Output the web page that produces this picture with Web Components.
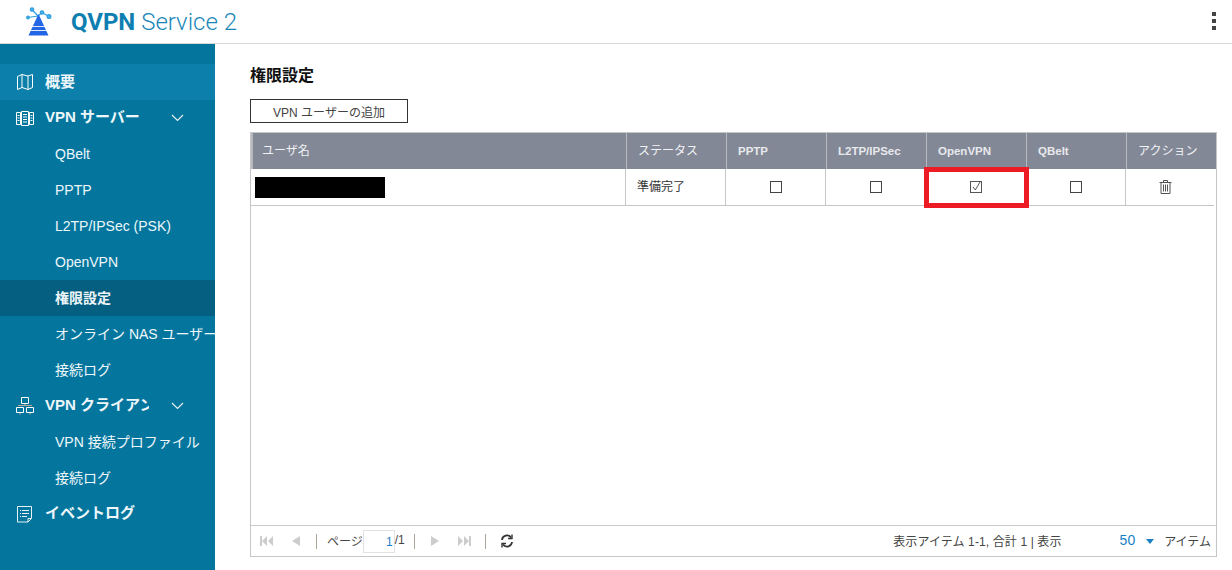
<!DOCTYPE html>
<html lang="ja"><head><meta charset="utf-8">
<style>
html,body{margin:0;padding:0;height:570px;width:1232px;overflow:hidden;background:#fff;font-family:"Liberation Sans","Noto Sans CJK JP",sans-serif}
qvpn-app{display:block}
</style></head><body>
<qvpn-app></qvpn-app>
<template id="t-header"><style>
:host{display:flex;align-items:center;height:43px;border-bottom:1px solid #d9d9d9;background:#fff;box-sizing:content-box}
svg.logo{margin-left:25px;width:28px;height:36px;flex:none}
.t{margin-left:18px;font:300 24px/30px Roboto,"Liberation Sans",sans-serif;color:#1a86b8;position:relative;top:0}
.t b{font-weight:700;color:#0f7fb2}
.sp{flex:1}
.dots{display:flex;flex-direction:column;gap:3px;margin-right:16px;margin-top:-1px}
.dots i{width:4px;height:4px;background:#444;display:block}
</style>
<svg class="logo" viewBox="0 0 28 36"><g stroke="#2f9fe0" stroke-width="1.2" fill="#4ab0ea"><line x1="13" y1="12" x2="7" y2="5.500"/><line x1="13" y1="12" x2="17" y2="8.500"/><line x1="17" y1="8.500" x2="24" y2="12.500"/><line x1="13" y1="12" x2="3" y2="13.500"/><circle cx="7" cy="5.500" r="1.700"/><circle cx="17" cy="8.500" r="1.700"/><circle cx="24" cy="12.500" r="1.900"/><circle cx="3" cy="13.500" r="1.300"/></g><path d="M13.500 10 L23.500 31.500 H3.500Z" fill="#2266e6"/><g fill="#fff" opacity=".85"><rect x="3" y="22" width="21" height="1"/><rect x="3" y="26" width="21" height="1"/></g></svg>
<div class="t"><b>QVPN</b> Service 2</div><div class="sp"></div>
<div class="dots"><i></i><i></i><i></i></div></template>

<template id="t-nav"><style>
:host{display:block;height:36px;box-sizing:border-box;color:#eef6fa;font-size:14px;line-height:36px;white-space:nowrap;overflow:hidden;position:relative}
.r{display:flex;height:36px;align-items:center}
.i{width:45px;flex:none;display:flex;padding-left:16px;box-sizing:border-box}
:host([kind=top]) .l{font-weight:700;font-size:15px;position:relative;top:-1px}
:host([kind=top][hi]) .l{top:0}
:host([kind=sub]) .r{padding-left:55px}
:host([kind=sub]) .i{display:none}
:host([active]){background:#055f80;font-weight:700}
:host([hi]){background:#0c80aa}
</style><div class="r"><span class="i"><slot name="icon"></slot></span><span class="l"><slot></slot></span></div><slot name="chev"></slot></template>

<template id="t-side"><style>
:host{display:block;width:215px;flex:none;background:#04769e;padding-top:20px;box-sizing:border-box;height:526px;overflow:hidden}
</style><slot></slot></template>

<template id="t-table"><style>
:host{display:flex;flex-direction:column;height:425px;box-sizing:border-box;border:1px solid #c6c6c6;width:967px;position:relative}
.g{display:grid;grid-template-columns:375px 100px 100px 100px 100px 100px 90px}
.h{height:36px;background:#838897;color:#f1f2f4;font-size:12px}
.h div{line-height:37px;height:36px;padding-left:11px;border-left:1px solid #b7b9bf;box-sizing:border-box}
.h div:first-child{border-left:2px solid #b7b9bf;padding-left:9px}
.h div.b{font-weight:700;color:#e8e9ec;font-size:11.5px}
.b1{height:36px;font-size:12px;color:#333;margin-right:2px;box-sizing:content-box;border-bottom:1px solid #c6c6c6}
.b1>div{display:flex;align-items:center;justify-content:center;border-right:1px solid #c6c6c6;box-sizing:border-box;height:36px}
.b1>div:last-child{border-right:0;padding-right:12px}
.u{justify-content:flex-start!important;padding-left:4px}
.mask{width:130px;height:21px;background:#000;margin-top:1px}
.st{justify-content:flex-start!important;padding-left:11px}
.st span{position:relative;top:-2px}
.sp{flex:1}
</style>
<div class="g h"><div>ユーザ名</div><div>ステータス</div><div class="b">PPTP</div><div class="b">L2TP/IPSec</div><div class="b">OpenVPN</div><div class="b">QBelt</div><div>アクション</div></div>
<div class="g b1">
<div class="u"><span class="mask"></span></div><div class="st"><span>準備完了</span></div>
<div><svg width="12" height="12"><rect x=".5" y=".5" width="11" height="11" fill="none" stroke="#444"/></svg></div>
<div><svg width="12" height="12"><rect x=".5" y=".5" width="11" height="11" fill="none" stroke="#444"/></svg></div>
<div><svg width="12" height="12"><rect x=".5" y=".5" width="11" height="11" fill="none" stroke="#555"/><path d="M3 6l2.300 3L10 1" fill="none" stroke="#555"/></svg></div>
<div><svg width="12" height="12"><rect x=".5" y=".5" width="11" height="11" fill="none" stroke="#444"/></svg></div>
<div><svg width="13" height="14" viewBox="0 0 13 14" fill="none" stroke="#555"><path d="M.5 2.500h12M4.500 2.500V.5h4v2M2 2.500v11h9v-11M4.500 4.500v7M6.500 4.500v7M8.500 4.500v7"/></svg></div>
</div>
<div class="sp"></div><slot></slot></template>

<template id="t-pager"><style>
:host{display:flex;align-items:center;height:30px;border-top:1px solid #c9c9c9;font-size:12px;color:#444;box-sizing:content-box;white-space:nowrap}
.s{width:1px;height:15px;background:#aaa598;flex:none}
svg{flex:none;display:block}
.in{width:32px;height:23px;border:1px solid #e2e2e2;box-sizing:border-box;text-align:right;color:#1a7fc4;line-height:23px;padding-right:1px}
.sp{flex:1}
.bl{color:#1a7fc4;font-size:14px}
.tx{position:relative;top:-1px}
</style>
<svg style="margin-left:9px" width="13" height="10" viewBox="0 0 13 10" fill="#ccc"><rect width="2" height="10"/><path d="M7 0v10L2 5zM13 0v10L8 5z"/></svg>
<svg style="margin-left:18px" width="10" height="10" viewBox="0 0 10 10" fill="#ccc"><path d="M9 0v10L1 5z"/></svg>
<span class="s" style="margin-left:15px"></span>
<span class="tx" style="margin-left:10px">ページ</span><span class="in">1</span><span class="tx">/1</span>
<span class="s" style="margin-left:9px"></span>
<svg style="margin-left:15px" width="10" height="10" viewBox="0 0 10 10" fill="#ccc"><path d="M1 0v10l8-5z"/></svg>
<svg style="margin-left:18px" width="13" height="10" viewBox="0 0 13 10" fill="#ccc"><rect x="11" width="2" height="10"/><path d="M0 0v10l5-5zM6 0v10l5-5z"/></svg>
<span class="s" style="margin-left:14px"></span>
<svg style="margin-left:14px" width="14" height="14" viewBox="0 0 14 14" fill="none" stroke="#333" stroke-width="1.8"><path d="M2 6a5 5 0 0 1 9-2.500M12 8a5 5 0 0 1-9 2.500"/><path d="M12 .5v4H8M2 13.500v-4h4" stroke-width="1.400"/></svg>
<span class="sp"></span>
<span class="tx" style="letter-spacing:.01em">表示アイテム 1-1, 合計 1 | 表示</span>
<span class="bl tx" style="margin-left:58px">50</span>
<svg style="margin-left:11px" width="8" height="5"><path d="M0 0h8L4 5z" fill="#1a7fc4"/></svg>
<span class="tx" style="margin-left:10px;margin-right:5px">アイテム</span></template>

<script>
const mk=(n,id)=>customElements.define(n,class extends HTMLElement{constructor(){super();this.attachShadow({mode:"open"}).append(document.getElementById(id).content.cloneNode(true))}});
mk("qvpn-header","t-header");mk("qvpn-nav","t-nav");mk("qvpn-side","t-side");mk("qvpn-table","t-table");mk("qvpn-pager","t-pager");
const ic={
map:'<svg width="18" height="16" viewBox="0 0 18 16" fill="none" stroke="#fff"><path d="M1.500 2.500L6 .5l6 1.500 4.500-1.500v13l-4.500 2-6-2-4.500 2zM6 .5v13.500M12 2v13.500"/></svg>',
srv:'<svg width="18" height="15" viewBox="0 0 18 15" fill="none" stroke="#fff"><path d="M.5 1.500h4v12h-4zM5.500 .5h7v14h-7zM13.500 1.500h4v12h-4zM7 3.500h4M7 6h4M7 8.500h4M7 11h4M1.500 4.500h2M1.500 7h2M1.500 9.500h2M14.500 4.500h2M14.500 7h2M14.500 9.500h2"/></svg>',
net:'<svg width="18" height="18" viewBox="0 0 18 18" fill="none" stroke="#fff"><path d="M5.500.5h7v6h-7zM.5 10.500h7v5h-7zM10.500 10.500h7v5h-7z"/><path d="M9 7v1.500M4 16v1.500M14 16v1.500M2 8.500h14" stroke="#b5a79a"/></svg>',
log:'<svg width="16" height="18" viewBox="0 0 16 18" fill="none" stroke="#fff"><path d="M1.500 1.500h14v12l-3.500 3.500h-10.500zM15 13.500h-3v3.500M4 5.500h1M6 5.500h7M4 8.500h1M6 8.500h7M4 11.500h1M6 11.500h5" stroke-width=".9"/></svg>'};
const chev='<svg slot="chev" style="position:absolute;left:171px;top:14px" width="13" height="8" viewBox="0 0 13 8" fill="none" stroke="#e6f1f5" stroke-width="1.2"><path d="M1 1l5.500 5.500L12 1"/></svg>';
const nav=(k,t,o={})=>`<qvpn-nav kind="${k}"${o.hi?' hi':''}${o.a?' active':''}>${o.i?`<span slot="icon" style="display:flex">${ic[o.i]}</span>`:''}${t}${o.c?chev:''}</qvpn-nav>`;
customElements.define("qvpn-app",class extends HTMLElement{constructor(){super();const s=this.attachShadow({mode:"open"});
s.innerHTML=`<style>:host{display:block;width:1232px;height:570px;overflow:hidden;position:relative}
.m{display:flex}.c{flex:1;padding:0 15px 0 35px;min-width:0;box-sizing:border-box}
h1{margin:23px 0 0;font-size:16px;line-height:18px;color:#111;font-weight:700}
button{display:block;margin:14px 0 9px;width:158px;height:24px;border:1px solid #333;background:#fff;font:12px "Liberation Sans","Noto Sans CJK JP",sans-serif;color:#444;padding:0}
.red{position:absolute;left:924px;top:167px;width:105px;height:41px;border:5px solid #ed1c24;box-sizing:border-box}
.clip{display:inline-block;width:104px;overflow:hidden;vertical-align:top}
</style><qvpn-header></qvpn-header><div class="m"><qvpn-side>
${nav("top","概要",{i:"map",hi:1})}${nav("top","VPN サーバー",{i:"srv",c:1})}
${nav("sub","QBelt")}${nav("sub","PPTP")}${nav("sub","L2TP/IPSec (PSK)")}${nav("sub","OpenVPN")}${nav("sub","権限設定",{a:1})}${nav("sub","オンライン NAS ユーザー")}${nav("sub","接続ログ")}
${nav("top",'<span class="clip">VPN クライアント</span>',{i:"net",c:1})}${nav("sub","VPN 接続プロファイル")}${nav("sub","接続ログ")}${nav("top","イベントログ",{i:"log"})}
</qvpn-side><div class="c"><h1>権限設定</h1><button>VPN ユーザーの追加</button><qvpn-table><qvpn-pager></qvpn-pager></qvpn-table></div></div><div class="red"></div>`;}});
</script>
</body></html>
